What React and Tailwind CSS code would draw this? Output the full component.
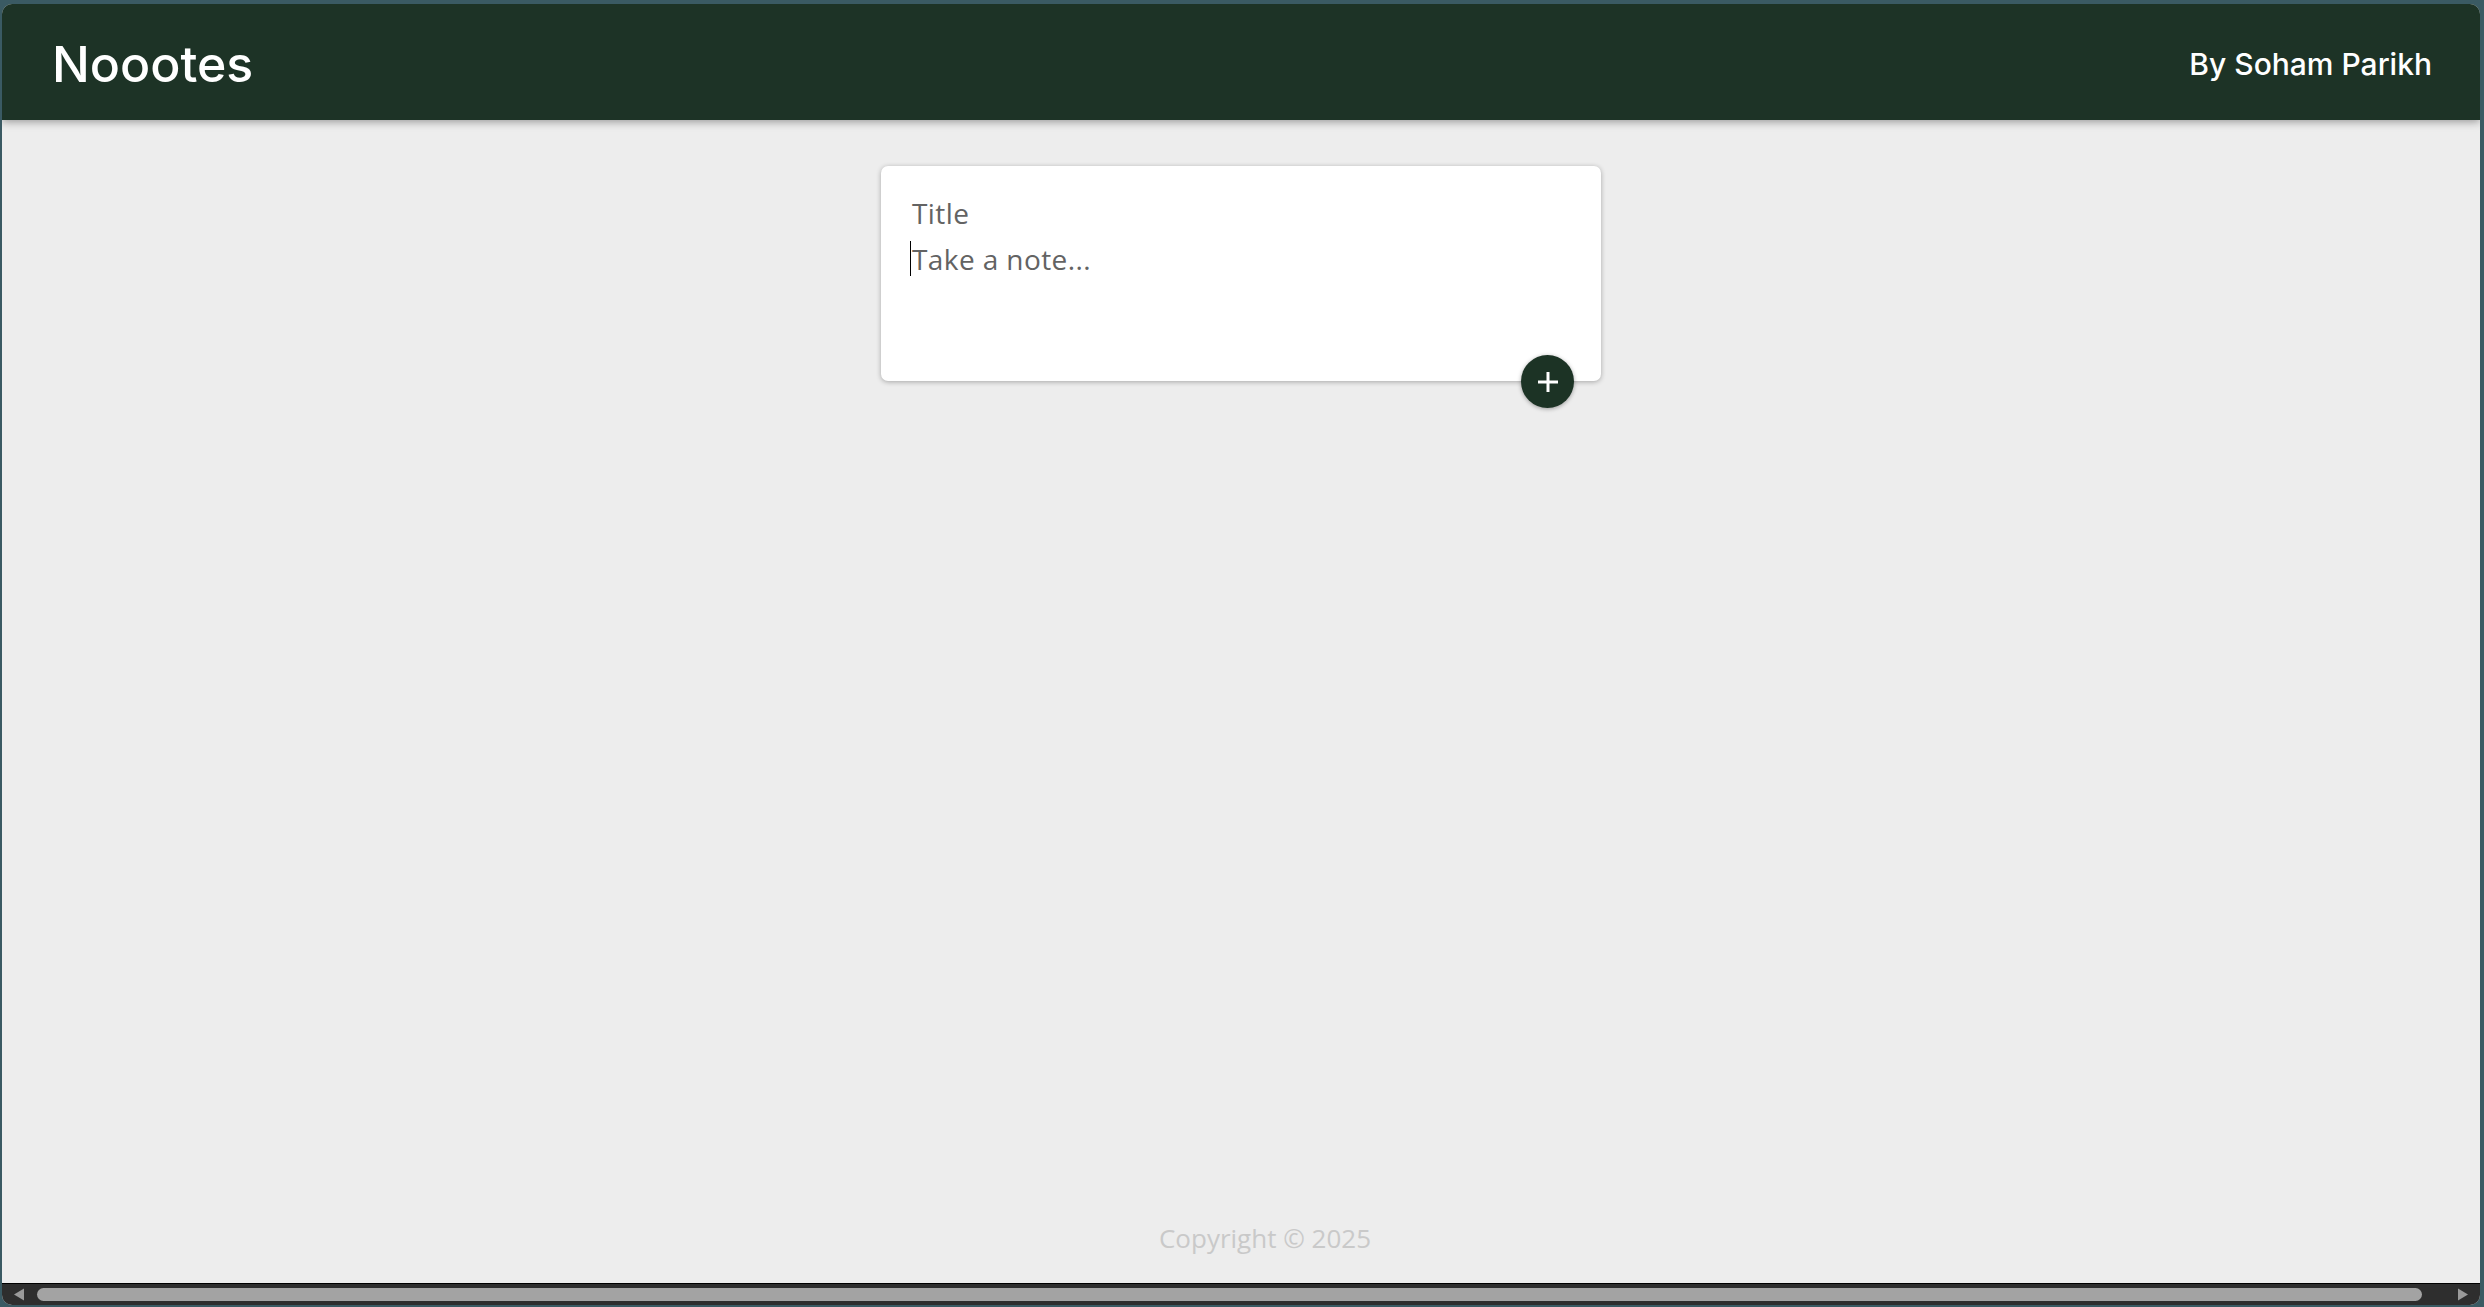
import React from "react";

export default function App() {
  return (
    <div className="w-[2484px] h-[1307px] bg-[#3a5a63] pt-[4px] pl-[2px] pr-[4px] pb-[2px] overflow-hidden">
      <div className="w-full h-full rounded-[10px] overflow-hidden bg-[#ededed] flex flex-col relative">
        <header className="h-[116px] shrink-0 bg-[#1d3326] flex items-center justify-between pl-[50px] pr-[48px] shadow-[0_2px_8px_rgba(0,0,0,0.35)] relative z-10">
          <h1 className="text-white text-[50px] leading-none font-['Inter',sans-serif] font-medium pt-[4px]">Noootes</h1>
          <div className="text-white text-[30px] leading-none font-['Inter',sans-serif] font-medium pt-[3px]">By Soham Parikh</div>
        </header>

        <main className="flex-1 flex justify-center pt-[46px]">
          <div className="relative w-[720px] h-[215px] bg-white rounded-[7px] shadow-[0_1px_5px_rgba(0,0,0,0.3)] px-[31px] pt-[24px] font-['Open_Sans',sans-serif] text-[28px] text-[#636363] font-normal">
            <div className="leading-[46px] tracking-[0.4px]">Title</div>
            <div className="leading-[46px] tracking-[0.4px] flex items-center">
              <span className="relative">
                <span className="absolute left-[-2px] top-[5px] w-[1px] h-[35px] bg-black" />
                Take a note...
              </span>
            </div>
            <button className="absolute right-[27px] bottom-[-27px] w-[53px] h-[53px] rounded-full bg-[#1c3325] shadow-[0_1px_4px_rgba(0,0,0,0.35)] flex items-center justify-center">
              <svg width="24" height="24" viewBox="0 0 24 24">
                <path d="M12 2v20M2 12h20" stroke="white" strokeWidth="3" strokeLinecap="butt" />
              </svg>
            </button>
          </div>
        </main>

        <footer className="h-[90px] shrink-0 flex items-center justify-center pl-[48px] text-[#c9c9c9] text-[26px] font-['Open_Sans',sans-serif]">
          Copyright © 2025
        </footer>

        <div className="h-[22px] shrink-0 bg-[#2e2e2e] border-t border-black flex items-center relative">
          <svg className="absolute left-[11px] top-[4px]" width="12" height="13" viewBox="0 0 12 13">
            <path d="M11 0.5 L11 12.5 L1 6.5 Z" fill="#9a9a9a" />
          </svg>
          <div className="absolute left-[35px] right-[58px] top-[4px] h-[13px] rounded-[7px] bg-[#a3a3a3]" />
          <svg className="absolute right-[11px] top-[4px]" width="12" height="13" viewBox="0 0 12 13">
            <path d="M1 0.5 L1 12.5 L11 6.5 Z" fill="#9a9a9a" />
          </svg>
        </div>
      </div>
    </div>
  );
}
